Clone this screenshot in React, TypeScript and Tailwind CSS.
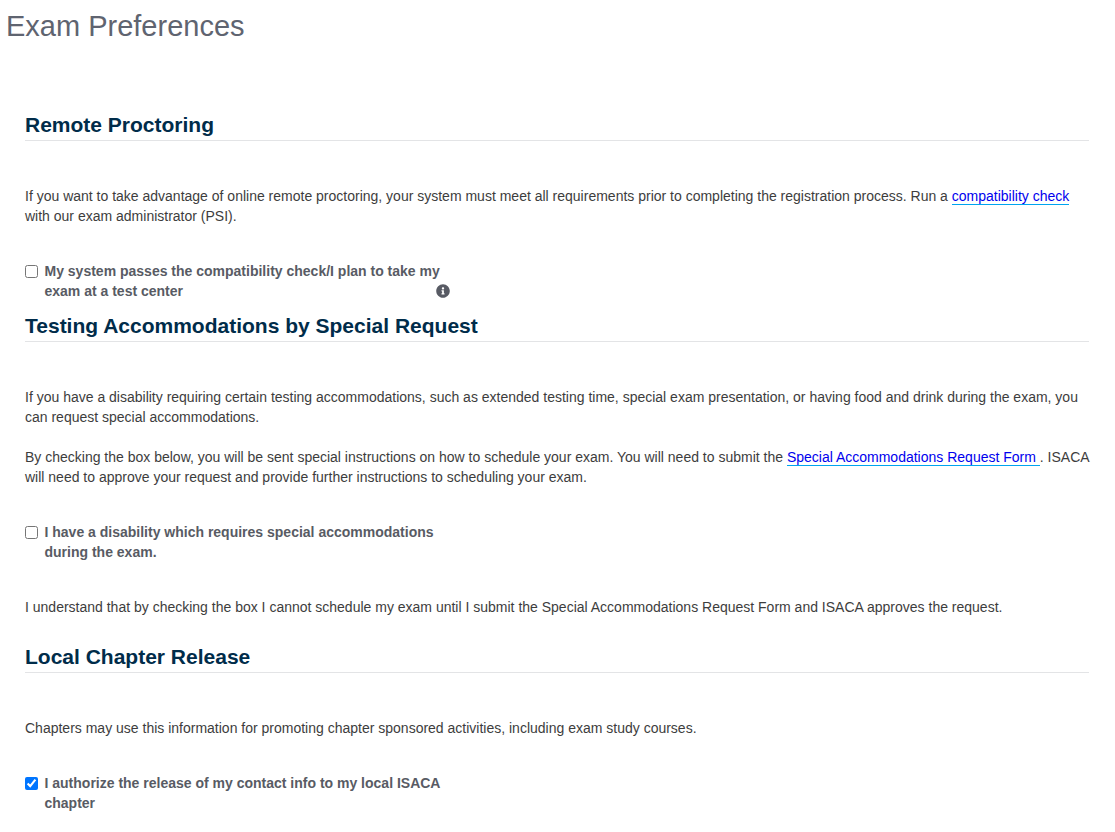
import { FaInfoCircle } from 'react-icons/fa';
import type { ReactNode } from 'react';

function SectionHeading({ children }: { children: ReactNode }) {
  return (
    <h2 className="border-b border-[#e3e4e6] pb-[3px] text-[21px] leading-[25px] font-bold text-[#002c4a]">
      {children}
    </h2>
  );
}

function CheckRow({ lines, checked }: { lines: string; checked?: boolean }) {
  return (
    <label className="flex w-[416px] items-start gap-[6.5px] text-[14px] leading-[20px] font-bold text-[#585b64]">
      <input type="checkbox" defaultChecked={checked} className="mt-[4px] h-[13px] w-[13px] shrink-0" />
      <span>{lines}</span>
    </label>
  );
}

function Link({ children }: { children: ReactNode }) {
  return <a href="#" className="border-b-[1.5px] border-[#00a4ef] text-[#0000ee]">{children}</a>;
}

export default function App() {
  return (
    <div className="h-[832px] overflow-hidden bg-white font-['Liberation_Sans',Arial,sans-serif] text-[14px] leading-[20px] text-[#3d3d3d]">
      <h1 className="pt-[8px] pl-[6px] text-[29px] leading-[36px] font-normal text-[#5f6470]">Exam Preferences</h1>

      <div className="px-[25px] pr-[26px] pt-[68px]">
        <section>
          <SectionHeading>Remote Proctoring</SectionHeading>
          <p className="mt-[45px]">
            If you want to take advantage of online remote proctoring, your system must meet all requirements prior to completing the registration process. Run a <Link>compatibility check</Link> with our exam administrator (PSI).
          </p>
          <div className="relative mt-[35px]">
            <CheckRow lines="My system passes the compatibility check/I plan to take my exam at a test center" />
            <FaInfoCircle className="absolute top-[23px] left-[411px] text-[14px] text-[#585b64]" />
          </div>
        </section>

        <section className="mt-[12px]">
          <SectionHeading>Testing Accommodations by Special Request</SectionHeading>
          <p className="mt-[45px]">
            If you have a disability requiring certain testing accommodations, such as extended testing time, special exam presentation, or having food and drink during the exam, you can request special accommodations.
          </p>
          <p className="mt-[20px]">
            By checking the box below, you will be sent special instructions on how to schedule your exam. You will need to submit the <Link>Special Accommodations Request Form </Link>. ISACA will need to approve your request and provide further instructions to scheduling your exam.
          </p>
          <div className="mt-[35px]">
            <CheckRow lines="I have a disability which requires special accommodations during the exam." />
          </div>
          <p className="mt-[35px]">
            I understand that by checking the box I cannot schedule my exam until I submit the Special Accommodations Request Form and ISACA approves the request.
          </p>
        </section>

        <section className="mt-[27px]">
          <SectionHeading>Local Chapter Release</SectionHeading>
          <p className="mt-[45px]">
            Chapters may use this information for promoting chapter sponsored activities, including exam study courses.
          </p>
          <div className="mt-[35px]">
            <CheckRow checked lines="I authorize the release of my contact info to my local ISACA chapter" />
          </div>
        </section>
      </div>
    </div>
  );
}
